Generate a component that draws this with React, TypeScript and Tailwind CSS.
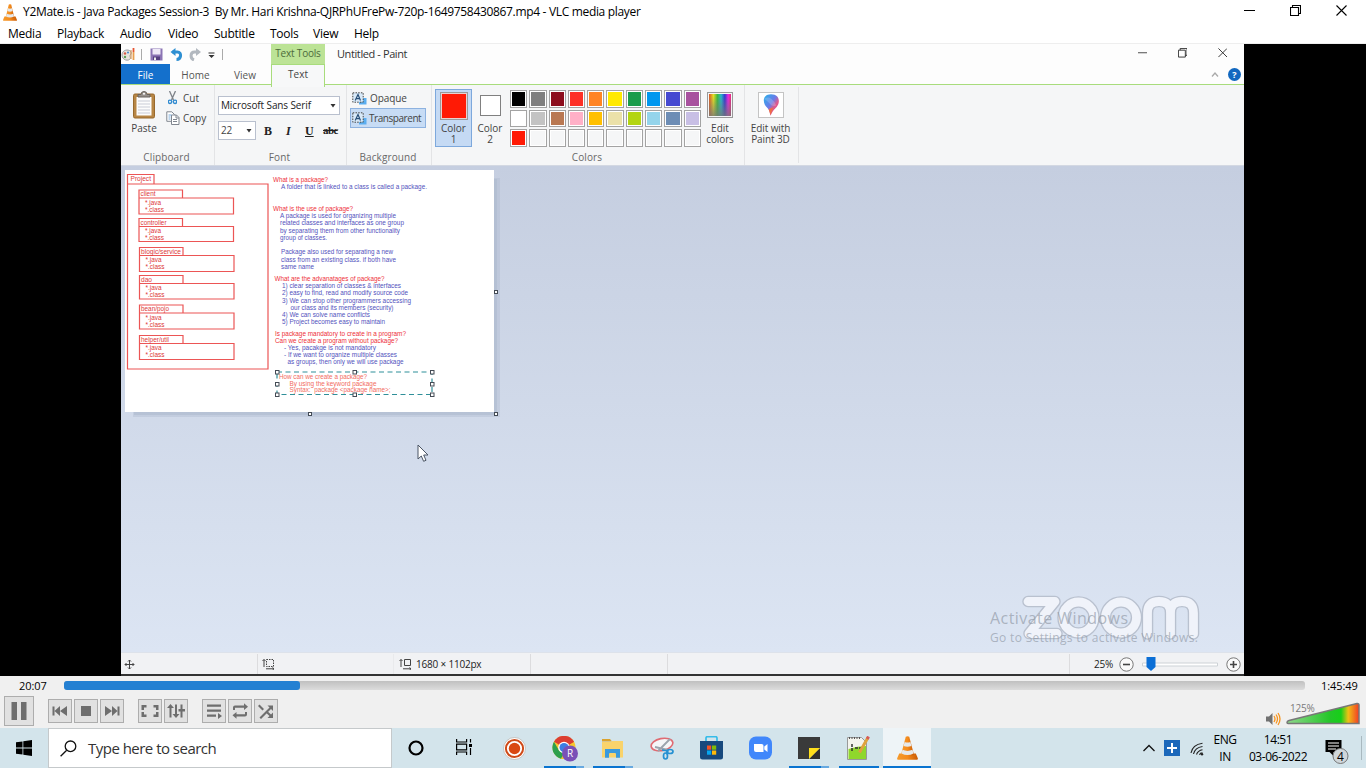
import type { ReactNode } from "react";

function Cone({ className }: { className?: string }) {
  return (
    <svg viewBox="0 0 24 26" className={className} preserveAspectRatio="none">
      <defs>
        <linearGradient id="cone" x1="0" x2="1">
          <stop offset="0" stopColor="#f59a2c" />
          <stop offset="0.5" stopColor="#f48b1c" />
          <stop offset="1" stopColor="#c95a05" />
        </linearGradient>
      </defs>
      <path d="M2.500 19h19l2.300 5.200q.3 1.500-1 1.500H1.200q-1.300 0-1-1.500z" fill="url(#cone)" />
      <path d="M10 .8q2-.9 4 0L19.500 20.500q-7.500 3.600-15 0z" fill="url(#cone)" />
      <path d="M8.700 6.500q3.300 1.300 6.600 0l1.200 4.300q-4.500 1.800-9 0zM6.300 15q5.700 2.400 11.400 0l1.200 4q-6.900 3.300-13.800 0z" fill="#e6e9eb" />
    </svg>
  );
}

function WindowButtons({ size, gap, color }: { size: number; gap: string; color: string }) {
  return (
    <div className={`flex items-center ${gap}`}>
      <svg width={size} height={size} viewBox="0 0 11 11" stroke={color} fill="none">
        <path d="M0 5.500h11" />
      </svg>
      <svg width={size} height={size} viewBox="0 0 11 11" stroke={color} fill="none" strokeWidth="1.100">
        <path d="M.5 2.500h8v8h-8zM2.500 2.500v-2h8v8h-2" />
      </svg>
      <svg width={size} height={size} viewBox="0 0 11 11" stroke={color} fill="none" strokeWidth="1.100">
        <path d="M.5.5l10 10M10.500.5l-10 10" />
      </svg>
    </div>
  );
}

function TitleBar() {
  return (
    <header className="flex h-6 items-center bg-white pr-[19px] pl-[3px]">
      <Cone className="h-[17px] w-[14px]" />
      <span className="ml-1.5 text-[12px] tracking-[-0.325px] whitespace-nowrap">
        Y2Mate.is - Java Packages Session-3&nbsp; By Mr. Hari Krishna-QJRPhUFrePw-720p-1649758430867.mp4 - VLC media player
      </span>
      <div className="ml-auto -mt-[3px]">
        <WindowButtons size={11} gap="gap-[35px]" color="#000" />
      </div>
    </header>
  );
}

function MenuBar() {
  return (
    <nav className="flex h-5 items-center border-b border-[#eee] bg-white pl-2 text-[12px] tracking-[-0.25px]">
      <span className="w-[49px]">Media</span>
      <span className="w-[63px]">Playback</span>
      <span className="w-12">Audio</span>
      <span className="w-[46px]">Video</span>
      <span className="w-14">Subtitle</span>
      <span className="w-[43px]">Tools</span>
      <span className="w-[41px]">View</span>
      <span>Help</span>
    </nav>
  );
}

function PaletteIcon() {
  return (
    <svg width="14" height="15" viewBox="0 0 14 15">
      <path d="M1 8C1 4 5 2 8.500 3.500c2 1 2.500 3 .8 4.500-1 1 .4 2 0 3.500C8 14.500 1 13.500 1 8z" fill="#e8e4dc" stroke="#999aa0" />
      <circle cx="4" cy="6.500" r="1.200" fill="#d65b46" />
      <circle cx="7" cy="5.500" r="1.100" fill="#4c8ed0" />
      <circle cx="4" cy="10" r="1.200" fill="#5c9c54" />
      <path d="M10 3v9" stroke="#d39a60" strokeWidth="1.200" />
      <path d="M12.500 5v8" stroke="#e8a04e" strokeWidth="1.800" />
      <path d="M12.500 1v4" stroke="#e65432" strokeWidth="1.800" />
    </svg>
  );
}

function PaintHeader() {
  return (
    <div className="flex h-[41px] border-b-[1.500px] border-[#a8dc7c] bg-[#fdfdfd]">
      <div className="flex w-[150px] flex-col">
        <div className="flex h-5 items-center">
          <PaletteIcon />
          <i className="ml-1.5 h-[11px] w-px bg-[#aaa]" />
          <svg width="13" height="13" viewBox="0 0 13 13" className="ml-[8px]">
            <path d="M.5.5h12v12H.5z" fill="#8b74b4" />
            <path d="M2.500 1h8v5.500h-8z" fill="#eee9f6" />
            <path d="M3 8.500h7V12H3z" fill="#55407f" />
            <path d="M4 9.500h2V12H4z" fill="#eee" />
          </svg>
          <svg width="13" height="13" viewBox="0 0 12 13" className="ml-[7px]">
            <path d="M2 4h5c4.500 0 4 7.500-1 7.500" stroke="#2e8fd2" strokeWidth="3" fill="none" />
            <path d="M0 4L5 0v8z" fill="#2e8fd2" />
          </svg>
          <svg width="12" height="13" viewBox="0 0 12 13" className="ml-[6px]">
            <path d="M10 4H5.500C1 4 1 10.500 5 12" stroke="#b2b8bf" strokeWidth="3" fill="none" />
            <path d="M12 4L7 0v8z" fill="#b2b8bf" />
          </svg>
          <svg width="7" height="7" viewBox="0 0 7 7" className="mt-[3px] ml-[7px]">
            <path d="M.5.5h6v1h-6zM.5 3h6L3.500 6z" fill="#333" />
          </svg>
          <i className="ml-[7px] h-[11px] w-px bg-[#aaa]" />
        </div>
        <div className="flex h-5 shrink-0 text-[10px] text-[#555]">
          <div className="flex w-[49px] items-center justify-center bg-[#1470cc] pt-[2px] text-white">File</div>
          <div className="flex w-[51px] items-center justify-center pt-[2px]">Home</div>
          <div className="flex w-12 items-center justify-center pt-[2px]">View</div>
        </div>
      </div>
      <div className="-mb-0.5 w-[54px] text-center text-[10px] whitespace-nowrap">
        <div className="h-5 bg-[#bce396] pt-[2px] tracking-[-0.2px] text-[#4d6b3c]">Text Tools</div>
        <div className="h-[23px] border-x-[1.500px] border-t border-[#a8dc7c] bg-[#f7f8f9] pt-[2px] text-[#444]">Text</div>
      </div>
      <div className="flex flex-1 flex-col">
        <div className="flex h-[21px] items-center pr-[17px] pl-[12px]">
          <span className="text-[11px] tracking-[-0.4px] text-[#333]">Untitled - Paint</span>
          <div className="ml-auto -mt-[3px]">
            <WindowButtons size={9.500} gap="gap-[30.500px]" color="#333" />
          </div>
        </div>
        <div className="flex h-[19px] items-center justify-end gap-[9px] pr-[3px]">
          <svg width="8" height="5" viewBox="0 0 8 5" fill="none" stroke="#aaa" strokeWidth="1.300">
            <path d="M1 4.500L4 1l3 3.500" />
          </svg>
          <span className="flex size-[13px] items-center justify-center rounded-full bg-[#1268c0] text-[9px] font-bold text-white">?</span>
        </div>
      </div>
    </div>
  );
}

function Group({ label, className, children }: { label: string; className: string; children: ReactNode }) {
  return (
    <section className={`flex flex-col border-r border-[#e3e4e6] ${className}`}>
      <div className="flex h-[65px]">{children}</div>
      <div className="pr-[2px] text-center text-[10px] leading-[14px] tracking-[0.1px] text-[#686868]">{label}</div>
    </section>
  );
}

function DropArrow() {
  return (
    <svg width="6" height="4" viewBox="0 0 6 4" className="ml-auto">
      <path d="M.5 0h5L3 3.500z" fill="#333" />
    </svg>
  );
}

function TextBackIcon() {
  return (
    <svg width="15" height="13" viewBox="0 0 15 13">
      <path d="M7 6h7.500v6.500H7z" fill="#5aaef0" />
      <path d="M.8.8h10.400v9.400H.8z" fill="#d8e9f8" stroke="#444" strokeDasharray="1.500 1.200" />
      <path d="M3.200 8.500L6 2.500l2.500 6M4.200 6.700h3.300" stroke="#294f78" strokeWidth="1.200" fill="none" />
    </svg>
  );
}

const swatches: string[][] = [
  ["bg-[#000]", "bg-[#7f7f7f]", "bg-[#8c0d1d]", "bg-[#fd3027]", "bg-[#ff8424]", "bg-[#ffe900]", "bg-[#1b9c4b]", "bg-[#0097ef]", "bg-[#4549d1]", "bg-[#a8519f]"],
  ["bg-white", "bg-[#c3c3c3]", "bg-[#b97852]", "bg-[#ffb0c7]", "bg-[#ffc000]", "bg-[#ebe1a9]", "bg-[#b3d512]", "bg-[#94d4eb]", "bg-[#6d8db5]", "bg-[#c8bfe5]"],
  ["bg-[#ff1a05]", "bg-[#f5f6f7]", "bg-[#f5f6f7]", "bg-[#f5f6f7]", "bg-[#f5f6f7]", "bg-[#f5f6f7]", "bg-[#f5f6f7]", "bg-[#f5f6f7]", "bg-[#f5f6f7]", "bg-[#f5f6f7]"],
];

function Ribbon() {
  return (
    <div className="flex h-[81px] border-b border-[#d3d8e2] bg-[#f5f6f7] text-[10px] text-[#444]">
      <Group label="Clipboard" className="w-[94px]">
        <div className="flex w-[46px] flex-col items-center pt-[6px]">
          <svg width="24" height="28" viewBox="0 0 24 28">
            <rect x="1.500" y="3" width="21" height="24" rx="1.500" fill="#b78645" stroke="#98692c" />
            <path d="M4.500 6h15v18.500h-15z" fill="#fcfcfc" />
            <path d="M6 10h12M6 13h12M6 16h12M6 19h12M6 22h12" stroke="#c9ccd6" />
            <path d="M6 6V3.500h3q0-3 3-3t3 3h3V6z" fill="#96908b" stroke="#69635c" />
            <circle cx="12" cy="2.800" r="1" fill="#fff" />
          </svg>
          <span className="mt-[2px]">Paste</span>
        </div>
        <div className="flex flex-col gap-[4px] pt-[5px] whitespace-nowrap">
          <div className="flex h-4 items-center gap-[6px]">
            <svg width="9" height="14" viewBox="0 0 9 14" className="mr-px ml-px" fill="none">
              <path d="M1.500 0l4 9M7.500 0l-4 9" stroke="#7d8289" strokeWidth="1.300" />
              <circle cx="2" cy="10.800" r="1.700" stroke="#318bd0" strokeWidth="1.400" />
              <circle cx="7" cy="10.800" r="1.700" stroke="#318bd0" strokeWidth="1.400" />
            </svg>
            <span className="-ml-px">Cut</span>
          </div>
          <div className="-ml-px flex h-4 items-center gap-[3px] tracking-[-0.1px]">
            <svg width="14" height="14" viewBox="0 0 14 14" fill="#fff" stroke="#80868f">
              <path d="M.8.8h5l2.500 2.500v7H.8z" />
              <path d="M5.500 4h5L13 6.500v7H5.500zM10 4v3h3M7 8.500h4M7 10.500h4" />
              <path d="M2.500 4h3M2.500 6h2M2.500 8h2" stroke="#75a8da" />
            </svg>
            Copy
          </div>
        </div>
      </Group>

      <Group label="Font" className="w-[132px]">
        <div className="flex flex-col gap-[6px] pt-[11px] pl-[3px]">
          <div className="flex h-[19px] w-[122px] items-center border border-[#b9c0ce] bg-white pr-[3px] pl-[2px] text-[10px] tracking-[-0.12px] whitespace-nowrap text-[#222]">
            Microsoft Sans Serif
            <DropArrow />
          </div>
          <div className="flex items-center">
            <div className="flex h-[19px] w-[38px] items-center border border-[#b9c0ce] bg-white pr-[3px] pl-[2px] tracking-[-0.3px]">
              22
              <DropArrow />
            </div>
            <div className="flex font-['Liberation_Serif',serif] text-[12px] text-[#222]">
              <b className="w-[21px] pl-2">B</b>
              <i className="w-[20px] pl-[9px] font-bold">I</i>
              <b className="w-[21px] pl-[8px] underline">U</b>
              <b className="pl-[5px] text-[11px] tracking-[-0.600px] line-through">abc</b>
            </div>
          </div>
        </div>
      </Group>

      <Group label="Background" className="w-[85px]">
        <div className="flex flex-col pt-[3px] pl-[3px] whitespace-nowrap">
          <div className="flex h-5 items-center gap-[3px] pl-[2px] tracking-[-0.1px]">
            <TextBackIcon />
            Opaque
          </div>
          <div className="flex h-5 w-[76px] items-center gap-[2px] border border-[#8db2e0] bg-[#c7dcf5] pl-px">
            <TextBackIcon />
            <span className="tracking-[-0.450px]">Transparent</span>
          </div>
        </div>
      </Group>

      <Group label="Colors" className="w-[313px]">
        <div className="mt-[4px] ml-[3px] flex h-[58px] w-[37px] flex-col items-center border border-[#7da8dc] bg-[#c5daf4] pt-[2px] leading-[11px]">
          <i className="mb-[3px] size-[28px] border border-[#9a9a9a] bg-[#ff1a05] outline-1 -outline-offset-2 outline-[#e8d0d0]" />
          <span>Color</span>
          <span>1</span>
        </div>
        <div className="mt-[10px] flex w-[36px] flex-col items-center leading-[11px]">
          <i className="mb-[7px] size-[21px] border border-[#808080] bg-white" />
          <span>Color</span>
          <span>2</span>
        </div>
        <div className="mt-[5px] ml-[2px] grid h-[57px] w-[191px] grid-cols-10 grid-rows-3 gap-[2px]">
          {swatches.flat().map((c, i) => (
            <i key={i} className="border border-[#a3a3a3] bg-white p-px">
              <b className={`block h-full w-full ${c}`} />
            </i>
          ))}
        </div>
        <div className="mt-[7px] ml-[2px] flex w-[34px] flex-col items-center leading-[11px]">
          <i className="mb-[5px] size-[26px] border border-[#999] p-px">
            <svg viewBox="0 0 24 24" className="size-full">
              <defs>
                <linearGradient id="rainbow">
                  <stop offset="0" stopColor="#d85426" />
                  <stop offset=".2" stopColor="#e5df25" />
                  <stop offset=".38" stopColor="#3eb93d" />
                  <stop offset=".55" stopColor="#28b7ca" />
                  <stop offset=".72" stopColor="#3338cf" />
                  <stop offset=".87" stopColor="#ec27e3" />
                  <stop offset="1" stopColor="#e52c74" />
                </linearGradient>
                <linearGradient id="fade" x2="0" y2="1">
                  <stop offset=".1" stopColor="#777" stopOpacity="0" />
                  <stop offset="1" stopColor="#777" stopOpacity=".8" />
                </linearGradient>
              </defs>
              <path d="M0 0h24v24H0z" fill="url(#rainbow)" />
              <path d="M0 0h24v24H0z" fill="url(#fade)" />
            </svg>
          </i>
          <span>Edit</span>
          <span className="tracking-[-0.1px]">colors</span>
        </div>
      </Group>

      <div className="my-0.5 flex w-[54px] flex-col items-center border-r border-[#e3e4e6] pt-[5px] pr-[2px] leading-[11px] tracking-[-0.1px] whitespace-nowrap">
        <i className="mb-[5px] flex size-[26px] items-center justify-center border border-[#c4c4c4] bg-white">
          <svg width="16" height="22" viewBox="0 0 17 23">
            <defs>
              <linearGradient id="drop" x1="0" y1="0" x2="1" y2="1">
                <stop offset="0" stopColor="#24b4eb" />
                <stop offset=".45" stopColor="#697be8" />
                <stop offset=".65" stopColor="#e35989" />
                <stop offset="1" stopColor="#aa42b8" />
              </linearGradient>
            </defs>
            <path d="M8.500 0C18 0 18.500 9 14.500 13.500 11.500 16.500 10 18 8 23c-1-3-.5-5-3-8C-1 10-1 0 8.500 0z" fill="url(#drop)" />
            <path d="M1 5q4-3 8 0t5 7q-4 2-7-2T1 5z" fill="#fff" opacity=".18" />
            <path d="M6 16l5-2-3 8z" fill="#ee6e48" />
          </svg>
        </i>
        <span>Edit with</span>
        <span>Paint 3D</span>
      </div>
    </div>
  );
}

type Line = [x: number, y: number, width: number, text: string];

const questions: Line[] = [
  [273, 182, 55, "What is a package?"],
  [273, 211, 80, "What is the use of package?"],
  [274.500, 281, 110, "What are the advanatages of package?"],
  [275, 335.500, 131, "Is package mandatory to create in a program?"],
  [275, 343, 123, "Can we create a program without package?"],
];

const answers: Line[] = [
  [281, 189, 146, "A folder that is linked to a class is called a package."],
  [280, 218, 116, "A package is used for organizing multiple"],
  [280, 225.300, 124, "related classes and interfaces as one group"],
  [280, 232.500, 120, "by separating them from other functionality"],
  [280, 239.700, 47, "group of classes."],
  [281, 254, 112, "Package also used for separating a new"],
  [281, 261.500, 115, "class from an existing class. if both have"],
  [281, 268.700, 33, "same name"],
  [282, 288, 119, "1) clear separation of classes & interfaces"],
  [282, 295.200, 126, "2) easy to find, read and modify source code"],
  [282, 302.500, 129, "3) We can stop other programmers accessing"],
  [290.500, 309.700, 103, "our class and its members (security)"],
  [282, 317, 88, "4) We can solve name conflicts"],
  [282, 324.300, 103, "5) Project becomes easy to maintain"],
  [284, 350, 92, "- Yes, pacakge is not mandatory"],
  [284, 357.200, 113, "- If we want to organize multiple classes"],
  [287.500, 364.200, 116, "as groups, then only we will use package"],
];

const typing: Line[] = [
  [279, 379.300, 88, "How can we create a package?"],
  [289.500, 385.800, 87, "By using the keyword package"],
  [289.500, 392, 101, "Syntax:  package <package name>;"],
];

const folders: [name: string, x: number, top: number, height: number, width: number][] = [
  ["client", 139, 190, 24, 15],
  ["controller", 139, 218.500, 23, 26],
  ["blogic/service", 139.500, 247.500, 24, 40],
  ["dao", 139.500, 275.500, 23.500, 11],
  ["bean/pojo", 139.500, 305, 24, 28],
  ["helper/util", 139.500, 335.500, 24, 28],
];

const handles: [number, number][] = [
  [277, 372], [354.500, 372], [432, 372],
  [277, 384], [432, 384],
  [277, 394.500], [354.500, 394.500], [432, 394.500],
];

function Lines({ items, fill }: { items: Line[]; fill: string }) {
  return (
    <g fill={fill}>
      {items.map(([x, y, w, text]) => (
        <text key={text} x={x} y={y} textLength={w} lengthAdjust="spacingAndGlyphs" xmlSpace="preserve">
          {text}
        </text>
      ))}
    </g>
  );
}

function Drawing() {
  return (
    <svg width="390" height="260" viewBox="121 166 390 260" className="font-['Liberation_Sans',sans-serif] text-[6.7px]">
      <path d="M133 178h367v239H133z" fill="#a9b5ca" opacity=".35" />
      <path d="M134 179h363v236H134z" fill="#a9b5ca" opacity=".45" />
      <path d="M125 170h369v242H125z" fill="#fff" />
      <g fill="none" stroke="#ec5555" strokeWidth="1.200">
        <path d="M127.500 184v-9.500h26.500V184M127.500 184h140.500v185H127.500z" />
        {folders.map(([name, x, top, h]) => (
          <path key={name} d={`M${x} ${top + 8}v-8h43.500v8M${x} ${top + 8}h94.500v${h - 8}h-94.500z`} />
        ))}
      </g>
      <g fill="#dc3838">
        <text x="130.500" y="181.300" textLength="20.500" lengthAdjust="spacingAndGlyphs">Project</text>
        {folders.map(([name, x, top, , w]) => (
          <g key={name}>
            <text x={x + 1.500} y={top + 6.300} textLength={w} lengthAdjust="spacingAndGlyphs">{name}</text>
            <text x={x + 6} y={top + 14.800} textLength="16" lengthAdjust="spacingAndGlyphs">*.java</text>
            <text x={x + 6} y={top + 21.800} textLength="19" lengthAdjust="spacingAndGlyphs">*.class</text>
          </g>
        ))}
      </g>
      <Lines items={questions} fill="#ee2f38" />
      <Lines items={answers} fill="#5252bd" />
      <Lines items={typing} fill="#f26b60" />
      <path d="M277 372h155v22.500H277z" fill="none" stroke="#2f8f99" strokeWidth="1.200" strokeDasharray="5 3.500" />
      <g fill="#fff" stroke="#444b55">
        {handles.map(([x, y]) => (
          <rect key={`${x}-${y}`} x={x - 1.500} y={y - 1.500} width="3.500" height="3.500" />
        ))}
        <rect x="494.500" y="290.500" width="3" height="3" />
        <rect x="308.500" y="412.500" width="3" height="3" />
        <rect x="494.500" y="412.500" width="3" height="3" />
      </g>
    </svg>
  );
}

function ZoomStrokes({ color, width }: { color: string; width: number }) {
  return (
    <g stroke={color} strokeWidth={width}>
      <path d="M8 8.500h27L9 40.500h28" />
      <circle cx="58.500" cy="24.500" r="15.500" />
      <circle cx="101" cy="24.500" r="15.500" />
      <path d="M127.500 41V20q0-11.500 11.500-11.500t11.500 11.500v21M150.500 20q0-11.500 11.500-11.500t11.500 11.500v21" />
    </g>
  );
}

function Workspace() {
  return (
    <div className="relative h-[486px] overflow-hidden bg-linear-to-b from-[#c5cee0] to-[#dce5f3]">
      <Drawing />
      <svg width="12" height="19" viewBox="0 0 12 19" className="absolute top-[278px] left-[296px]">
        <path d="M1 1v14l3.300-3 2.300 5.300 2.400-1L6.700 11H11z" fill="#fff" stroke="#4b5564" />
      </svg>
      <svg width="182" height="50" viewBox="0 0 182 50" className="absolute top-[427px] left-[899px]" fill="none" strokeLinecap="round" strokeLinejoin="round">
        <ZoomStrokes color="#b9c1cf" width={11.500} />
        <ZoomStrokes color="#f0f3fa" width={8.800} />
      </svg>
      <div className="absolute top-[442px] left-[869px] whitespace-nowrap text-[#8e96a3]/65">
        <div className="text-[16px] leading-5 tracking-[0.450px]">Activate Windows</div>
        <div className="text-[12px] leading-5 tracking-[0.330px]">Go to Settings to activate Windows.</div>
      </div>
    </div>
  );
}

function RoundSign({ plus }: { plus?: boolean }) {
  return (
    <svg width="15" height="15" viewBox="0 0 15 15" fill="none">
      <circle cx="7.500" cy="7.500" r="6.700" fill="#fafafa" stroke="#777" />
      <path d={plus ? "M4 7.500h7M7.500 4v7" : "M4 7.500h7"} stroke="#444" strokeWidth="1.600" />
    </svg>
  );
}

function PaintStatus() {
  return (
    <div className="flex h-6 items-stretch border-t border-b-2 border-t-[#dde2ea] border-b-[#333] bg-[#f1f2f4] pt-px text-[10px] text-[#222]">
      <div className="flex w-[137px] items-center border-r border-[#dcdcde] pl-[3px]">
        <svg width="11" height="11" viewBox="0 0 11 11" stroke="#444" fill="none">
          <path d="M5.500 1v9M1 5.500h9M4 2.500l1.500-1.500L7 2.500M4 8.500L5.500 10 7 8.500M2.500 4L1 5.500 2.500 7M8.500 4L10 5.500 8.500 7" />
        </svg>
      </div>
      <div className="flex w-[136px] items-center border-r border-[#e9eaec] pl-[4px]">
        <svg width="14" height="12" viewBox="0 0 14 12" stroke="#444" fill="none">
          <path d="M2 1.500V9M.5 3L2 1.500 3.500 3M4 10.800h8M10.500 9.500l1.500 1.300-1.500 1.200" />
          <path d="M4.500 1.500h7v7h-7z" strokeDasharray="1.500 1" />
        </svg>
      </div>
      <div className="flex w-[137px] items-center gap-1 border-r border-[#dcdcde] pl-[5px]">
        <svg width="13" height="12" viewBox="0 0 13 12" stroke="#444" fill="none">
          <path d="M2 1.500V9M.5 3L2 1.500 3.500 3M4 10.800h8M10.500 9.500l1.500 1.300-1.500 1.200M5.500 1.500h6v6h-6z" />
        </svg>
        <span className="tracking-[-0.2px] whitespace-nowrap">1680 × 1102px</span>
      </div>
      <div className="w-[137px] border-r border-[#dcdcde]" />
      <div className="w-[402px] border-r border-[#dcdcde]" />
      <div className="flex flex-1 items-center pr-[3px] pl-[24px]">
        <span className="w-[25px] tracking-[-0.200px]">25%</span>
        <RoundSign />
        <svg width="76" height="16" viewBox="0 0 76 16" className="mx-auto">
          <path d="M.5 7h75v3H.5z" fill="#fff" stroke="#cdd2d6" />
          <path d="M4.500 1h9v10L9 15l-4.500-4z" fill="#0b6fd6" />
        </svg>
        <RoundSign plus />
      </div>
    </div>
  );
}

function CtlButton({ big, children }: { big?: boolean; children: ReactNode }) {
  return (
    <button className={`flex items-center justify-center border border-[#adadad] bg-[#e1e1e1] ${big ? "size-[30px]" : "size-6"}`}>
      <svg width="18" height={big ? 20 : 16} viewBox={big ? "0 0 18 20" : "0 0 18 16"} fill="#6e6e6e">
        {children}
      </svg>
    </button>
  );
}

function Player() {
  return (
    <div className="h-[52px] bg-[#f0f0f0]">
      <div className="flex h-[19px] items-center text-[11px]">
        <span className="mt-px w-16 pl-[19px] tracking-[-0.050px]">20:07</span>
        <div className="-mt-px h-[9px] w-[1241px] rounded-[3px] bg-linear-to-b from-[#c0c0c0] to-[#dcdcdc]">
          <div className="h-full w-[236px] rounded-[3px] bg-[#2480d2]" />
        </div>
        <span className="mt-px ml-4 tracking-[-0.080px]">1:45:49</span>
      </div>
      <div className="flex h-[33px] pl-1">
        <div className="flex h-8 items-center">
          <CtlButton big>
            <path d="M1.500 1h5.500v18H1.500zM11 1h5.500v18H11z" />
          </CtlButton>
          <div className="ml-[14px] flex gap-0.5">
            <CtlButton>
              <path d="M1.500 3.500h2v9h-2zM3.500 8L9 3v10zM9 8l7-5v10z" />
            </CtlButton>
            <CtlButton>
              <path d="M4 3h10v10H4z" />
            </CtlButton>
            <CtlButton>
              <path d="M14.500 3.500h2v9h-2zM14.500 8L9 3v10zM9 8L2 3v10z" />
            </CtlButton>
          </div>
          <div className="ml-[14px] flex gap-0.5">
            <CtlButton>
              <path d="M.5 2h5v2.500h-2.500v2.500H.5zM12.500 2h5v5H15V4.500h-2.500zM.5 9H3v2.500h2.500V14h-5zM15 9h2.500v5h-5v-2.500H15z" />
            </CtlButton>
            <CtlButton>
              <path d="M2.500 4h2v10.500h-2zM3.500 1L7 5H0zM8 1.500h2V12H8zM9 15l-3.500-4h7zM13.500 1.500h2v13h-2zM11.500 6h6.500v2.500h-6.500z" />
            </CtlButton>
          </div>
          <div className="ml-[14px] flex gap-0.5">
            <CtlButton>
              <path d="M2 1.500h14v2.300H2zM2 6.500h14v2.300H2zM2 11.500h9v2.300H2zM13 10l4 3-4 3z" />
            </CtlButton>
            <CtlButton>
              <path d="M2 7V4.500q0-2 2-2h9V.3l4 3.400L13 7V4.800H4V7zM16 9v2.500q0 2-2 2H5.500v2.200L1.500 12.300 5.500 9v2.200H14V9z" />
            </CtlButton>
            <CtlButton>
              <path d="M2.500 1.500l4.500 4.500-1.500 1.500L1 3zM2.500 14.500L12.500 4.500 10.500 2.500H16v5.500L14 6 4 16 1.500 13.500zM9 9.800L10.500 8.300l3.500 3.200 2-2V15h-5.500l2-2z" />
            </CtlButton>
          </div>
        </div>
        <div className="relative mt-[6px] ml-auto flex pr-[6px]">
          <svg width="15" height="14" viewBox="0 0 15 14" className="mt-[11px] mr-[5px]">
            <path d="M0 4.500h3L6.500 1v12L3 9.500H0z" fill="#717171" />
            <path d="M8 4q2 3 0 6M10 2.500q3 4.500 0 9M12 1q4 6 0 12" fill="none" stroke="#f7941d" strokeWidth="1.300" />
          </svg>
          <svg width="74" height="23" viewBox="0 0 74 23" className="mt-[1px]">
            <defs>
              <linearGradient id="vol">
                <stop offset="0" stopColor="#8fd78c" />
                <stop offset=".6" stopColor="#24c628" />
                <stop offset=".75" stopColor="#17cf19" />
                <stop offset=".85" stopColor="#efc015" />
                <stop offset="1" stopColor="#f33b25" />
              </linearGradient>
            </defs>
            <path d="M1 20.500Q1 19 3 18.500L71 1.500q2-.3 2 1.500v18.500H2q-1 0-1-1z" fill="url(#vol)" stroke="#777" strokeWidth="1.500" />
          </svg>
          <span className="absolute top-px left-[24px] text-[10px] leading-[13px] tracking-[-0.200px] text-[#7a7a7a]">125%</span>
        </div>
      </div>
    </div>
  );
}

function Task({ run, active, stacked, wide, children }: { run?: boolean; active?: boolean; stacked?: boolean; wide: string; children: ReactNode }) {
  return (
    <div className={`relative flex h-10 items-center justify-center ${wide} ${active ? "bg-[#eef4f7]" : ""}`}>
      {children}
      {(run || active) && (
        <div className={`absolute bottom-0 flex h-0.5 ${active ? "w-full" : "w-10"}`}>
          <i className="flex-1 bg-[#0a74d0]" />
          {stacked && <i className="w-2 bg-[#67a9e0]" />}
        </div>
      )}
    </div>
  );
}

function Taskbar() {
  return (
    <footer className="flex h-10 items-center bg-[#d3e4eb] text-black">
      <div className="flex w-12 justify-center">
        <svg width="16" height="16" viewBox="0 0 16 16">
          <path d="M0 2.300L6.500 1.400v6.200H0zM7.300 1.300L16 0v7.600H7.300zM0 8.400h6.500v6.200L0 13.700zM7.300 8.400H16V16l-8.700-1.300z" />
        </svg>
      </div>
      <div className="flex h-10 w-[344px] items-center border border-[#c5c9cb] bg-white pl-[11px]">
        <svg width="17" height="17" viewBox="0 0 17 17" fill="none" stroke="#111" strokeWidth="1.300">
          <circle cx="10.500" cy="6.300" r="5.300" />
          <path d="M6.700 10.200L.6 16.300" />
        </svg>
        <span className="ml-[11px] text-[15px] tracking-[-0.520px] text-[#333]">Type here to search</span>
      </div>
      <Task wide="w-12">
        <svg width="16" height="16" viewBox="0 0 16 16">
          <circle cx="8" cy="8" r="6.500" fill="none" stroke="#000" strokeWidth="2.200" />
        </svg>
      </Task>
      <Task wide="w-12">
        <svg width="16" height="16" viewBox="0 0 16 16" fill="none" stroke="#000" strokeWidth="1.200" className="-mt-0.5">
          <path d="M.6 0v3h10V0M.6 16v-3h10v3M.6 5.200h10v5.600H.6zM14.500 0v3.500M14.500 9v7" />
          <path d="M13 5h3v3h-3z" fill="#000" stroke="none" />
        </svg>
      </Task>
      <Task wide="w-[53px]">
        <svg width="23" height="23" viewBox="0 0 23 23">
          <circle cx="11.500" cy="11.500" r="11" fill="#fff" stroke="#b5b0ac" strokeWidth=".7" />
          <circle cx="11.500" cy="11.500" r="8.600" fill="none" stroke="#cf4a18" strokeWidth="2" />
          <circle cx="11.500" cy="11.500" r="5.700" fill="#d94812" />
        </svg>
      </Task>
      <Task run stacked wide="w-[46px]">
        <svg width="27" height="27" viewBox="0 0 27 27" className="mt-[3px] ml-[3px]">
          <circle cx="12" cy="11.500" r="11.500" fill="#f6c62d" />
          <path d="M12 11.500L2 5.700A11.500 11.500 0 0 1 22 5.700z" fill="#dc3e32" />
          <path d="M22 5.700H12v5.800z" fill="#dc3e32" />
          <path d="M2 5.700l5 8.700 5 2.600-3 5.700A11.500 11.500 0 0 1 2 5.700z" fill="#2da04d" />
          <circle cx="12" cy="11.500" r="5.800" fill="#fff" />
          <circle cx="12" cy="11.500" r="4.500" fill="#3c7de4" />
          <circle cx="18" cy="17.500" r="8" fill="#7a50b7" />
          <text x="18" y="21" textAnchor="middle" fill="#fff" className="text-[10px]">R</text>
        </svg>
      </Task>
      <Task run stacked wide="w-[51px]">
        <svg width="21" height="19" viewBox="0 0 21 19">
          <path d="M0 0h8l2 2.500H0z" fill="#dba32e" />
          <path d="M0 3h9l1-1h11v16.500H0z" fill="#f9d36b" />
          <path d="M3 10h15v8.800h-4V15q0-1-1-1H8q-1 0-1 1v3.800H3z" fill="#3a9add" />
        </svg>
      </Task>
      <Task wide="w-12">
        <svg width="24" height="23" viewBox="0 0 24 23" fill="none">
          <ellipse cx="12" cy="7.500" rx="11" ry="6" transform="rotate(-12 12 7.500)" fill="#f5f6f8" stroke="#e06b72" strokeWidth="1.600" />
          <path d="M20 2L8 14M5 10l13 3" stroke="#9ba4ad" strokeWidth="1.800" />
          <ellipse cx="20" cy="14.500" rx="3" ry="2" stroke="#2791d2" strokeWidth="1.700" />
          <ellipse cx="15.500" cy="19" rx="2" ry="3" stroke="#2791d2" strokeWidth="1.700" />
          <path d="M12 13l6 1-2 3" stroke="#2791d2" strokeWidth="1.500" />
        </svg>
      </Task>
      <Task wide="w-[50px]">
        <svg width="23" height="24" viewBox="0 0 23 24">
          <path d="M6 6V2q0-1.300 1.300-1.300h8.400Q17 .7 17 2v4" fill="none" stroke="#36bce9" strokeWidth="1.700" />
          <path d="M0 5h23v16q0 2.500-2.500 2.500h-18Q0 23.500 0 21z" fill="#17497d" />
          <path d="M7 9.500h4.200v4.200H7z" fill="#f35325" />
          <path d="M12 9.500h4.200v4.200H12z" fill="#81bc06" />
          <path d="M7 14.500h4.200v4.200H7z" fill="#05a6f0" />
          <path d="M12 14.500h4.200v4.200H12z" fill="#ffba08" />
        </svg>
      </Task>
      <Task wide="w-12">
        <svg width="23" height="24" viewBox="0 0 23 24">
          <rect y=".5" width="23" height="23" rx="7" fill="#4087fb" />
          <path d="M5 8h7.500q2 0 2 2v6H7q-2 0-2-2zM15.300 10.500L18.500 8v8l-3.200-2.500z" fill="#fff" />
        </svg>
      </Task>
      <Task run stacked wide="w-[50px]">
        <svg width="22" height="22" viewBox="0 0 22 22">
          <path d="M0 0h22v11L11 22H0z" fill="#3a3a3a" />
          <path d="M22 11v11H11z" fill="#303030" />
          <path d="M11 11h11L11 22z" fill="#ffdf1b" />
        </svg>
      </Task>
      <Task run wide="w-[49px]">
        <svg width="23" height="25" viewBox="0 0 23 25">
          <path d="M.5 1.500h14l5 5v17H.5z" fill="#f4f4ee" stroke="#999" />
          <path d="M1.500 13q9-3 17.500-3v13h-17.500z" fill="#8fd72c" />
          <path d="M2 2h12" stroke="#555" strokeWidth="2" strokeDasharray="1 1.500" />
          <path d="M5 8v8M8 12h6" stroke="#333" strokeWidth="1.500" strokeDasharray="3 1" />
          <path d="M21 1.500l-8.500 15" stroke="#e0a23d" strokeWidth="3" />
          <path d="M21.500.5l-1.300 2.500" stroke="#d65b58" strokeWidth="3" />
        </svg>
      </Task>
      <Task active wide="w-12">
        <Cone className="h-[24px] w-[21px]" />
      </Task>
      <div className="ml-auto flex items-center">
        <svg width="12" height="8" viewBox="0 0 12 8" fill="none" stroke="#111" strokeWidth="1.300">
          <path d="M.5 7L6 1.500 11.500 7" />
        </svg>
        <svg width="16" height="16" viewBox="0 0 16 16" className="ml-[9px]">
          <path d="M0 0h16v16H0z" fill="#1c68ba" />
          <path d="M3 8h10M8 3v10" stroke="#fff" strokeWidth="2" />
        </svg>
        <svg width="14" height="14" viewBox="0 0 14 14" className="mt-0.5 ml-[10px]" fill="none" stroke="#222" strokeWidth="1.100">
          <path d="M1 11Q2.500 2.500 12.500 1.200M3.500 12Q5 5.500 12.500 4.500M6.500 12.500Q8 8.500 12.500 7.800" />
          <path d="M9.500 12.800q.5-2 3-2" />
          <circle cx="12" cy="12.300" r="1.200" fill="#222" stroke="none" />
        </svg>
        <div className="ml-[5px] w-8 text-center text-[12px] leading-[17px] tracking-[-0.500px]">
          <div>ENG</div>
          <div>IN</div>
        </div>
        <div className="ml-[5px] w-16 text-center text-[12px] leading-[17px] tracking-[-0.450px] whitespace-nowrap">
          <div>14:51</div>
          <div>03-06-2022</div>
        </div>
        <div className="relative ml-[15px] h-6 w-[37px] border-r border-[#a9b9c0]">
          <svg width="26" height="27" viewBox="0 0 26 27" className="absolute top-[3px] left-0">
            <path d="M.5 1h16v12h-8v4l-4-4h-4z" />
            <path d="M3 4h11M3 7h11M3 10h8" stroke="#fff" />
            <circle cx="15.500" cy="17" r="7.500" fill="#cfd6da" stroke="#777" />
            <text x="15.500" y="21.500" textAnchor="middle" className="text-[12px]">4</text>
          </svg>
        </div>
        <div className="w-1" />
      </div>
    </footer>
  );
}

export default function App() {
  return (
    <div className="h-[768px] w-[1366px] overflow-hidden bg-white font-['Open_Sans','Noto_Sans',sans-serif] text-black">
      <TitleBar />
      <MenuBar />
      <main className="flex h-[632px] justify-start bg-black pl-[121px]">
        <div className="w-[1123px]">
          <PaintHeader />
          <Ribbon />
          <Workspace />
          <PaintStatus />
        </div>
      </main>
      <Player />
      <Taskbar />
    </div>
  );
}
